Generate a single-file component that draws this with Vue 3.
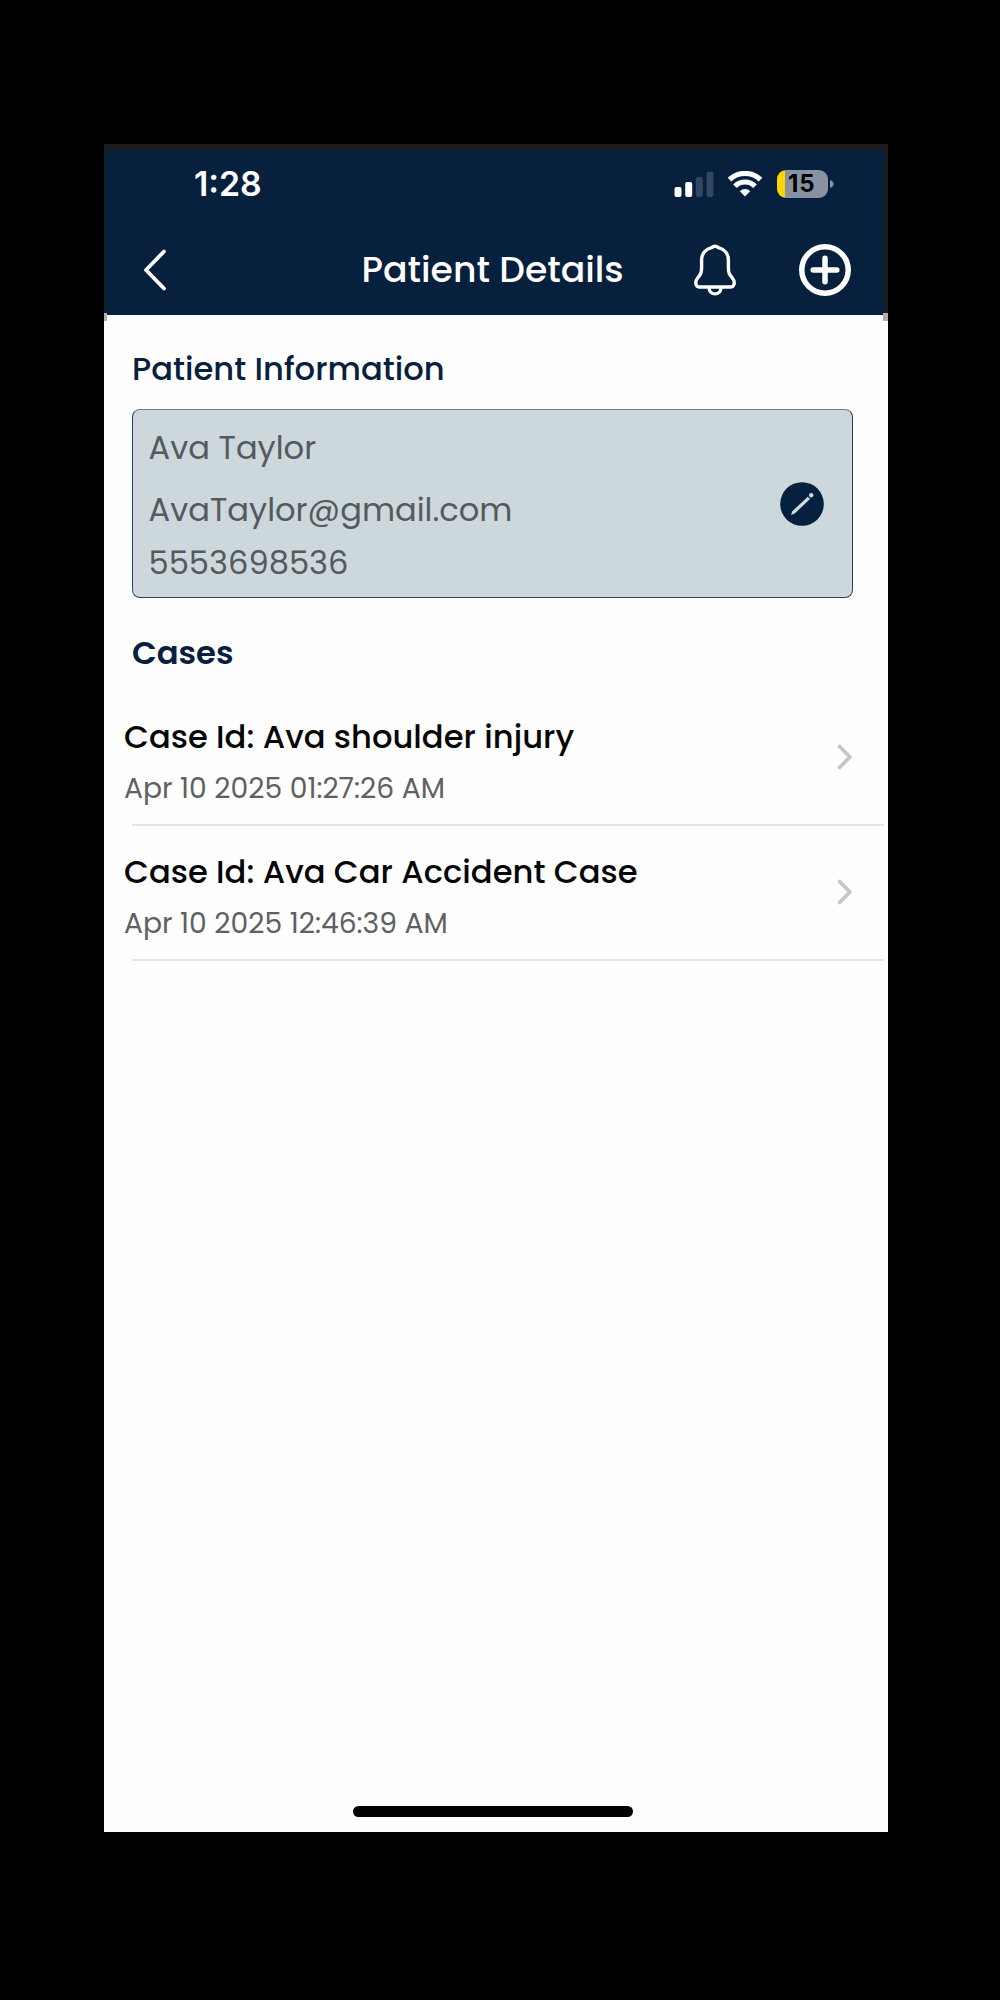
<script setup>
const cases = [
  { title: 'Case Id: Ava shoulder injury', date: 'Apr 10 2025 01:27:26 AM' },
  { title: 'Case Id: Ava Car Accident Case', date: 'Apr 10 2025 12:46:39 AM' },
]
</script>

<template>
  <main class="stage">
    <div class="phone">
      <header class="header">
        <div class="status">
          <span class="time">1:28</span>
          <svg class="signal" width="40" height="26" viewBox="0 0 40 26">
            <rect x="0.5" y="16" width="7" height="10" rx="2" fill="#fff" />
            <rect x="11.2" y="11" width="7" height="15" rx="2" fill="#fff" />
            <rect x="21.8" y="6" width="7" height="20" rx="2" fill="#334762" />
            <rect x="32.5" y="0.8" width="7" height="25.2" rx="2" fill="#334762" />
          </svg>
          <svg class="wifi" width="36" height="26" viewBox="0 0 36 26">
            <g fill="none" stroke="#fff" stroke-width="5.2">
              <path d="M2.5 8.6A22.5 22.5 0 0 1 33.500 8.600" />
              <path d="M8 15.200A14 14 0 0 1 28 15.200" />
            </g>
            <path d="M18 25.500L12.800 20.200A7.500 7.500 0 0 1 23.200 20.200Z" fill="#fff" />
          </svg>
          <div class="battery"><span class="pct">15</span></div>
          <svg class="nub" width="4" height="8" viewBox="0 0 4 8"><path d="M0 0Q3.5 1.2 3.5 4T0 8Z" fill="#8992a0" /></svg>
        </div>
        <nav class="nav">
          <svg class="back" width="24" height="44" viewBox="0 0 24 44"><path d="M21 3.5L3 22L21 40.5" fill="none" stroke="#fff" stroke-width="3.8" stroke-linecap="round" stroke-linejoin="round" /></svg>
          <h1 class="name">Patient Details</h1>
          <svg class="bell" width="42" height="52" viewBox="0 0 42 52">
            <g fill="none" stroke="#fff" stroke-width="3.4" stroke-linejoin="round">
              <path d="M17.5 3.6Q21 .8 24.5 3.6C30.500 5.300 34.400 10 34.400 16V24C34.400 29 35.500 30.500 38 33.500C40.500 36.500 40.800 39 39.500 41.500Q38.800 43 37 43H5Q3.200 43 2.500 41.500C1.200 39 1.500 36.500 4 33.500C6.500 30.500 7.600 29 7.600 24V16C7.600 10 11.500 5.300 17.500 3.600Z" />
              <path d="M15 43.500C15 52 27 52 27 43.500" />
            </g>
          </svg>
          <svg class="add" width="52" height="52" viewBox="0 0 52 52"><g fill="none" stroke="#fff" stroke-width="5.5" stroke-linecap="round"><circle cx="26" cy="26" r="23.2" /><path d="M26 14.200V37.800M14.200 26H37.800" /></g></svg>
        </nav>
      </header>
      <div class="ears"><i></i><i></i></div>
      <section class="info">
        <h2 class="heading">Patient Information</h2>
        <div class="card">
          <div class="lines">
            <p>Ava Taylor</p>
            <p class="email">AvaTaylor@gmail.com</p>
            <p class="tel">5553698536</p>
          </div>
          <svg class="edit" width="44" height="44" viewBox="0 0 44 44"><circle cx="22" cy="22" r="21.8" fill="#06203f" /><path d="M11 33L12.3 29.200L27.800 14.700L30 17L14.700 31.600Z" fill="#cfdbe0" /><circle cx="31.2" cy="13.2" r="2.2" fill="#cfdbe0" /></svg>
        </div>
        <h2 class="heading cases">Cases</h2>
      </section>
      <ul class="list">
        <li v-for="item in cases" :key="item.date" class="row">
          <div>
            <p class="title">{{ item.title }}</p>
            <p class="date">{{ item.date }}</p>
          </div>
          <svg class="chev" width="18" height="28" viewBox="0 0 18 28"><path d="M3.5 3.5L14 14L3.5 24.5" fill="none" stroke="#c6c6c7" stroke-width="3.8" stroke-linecap="round" stroke-linejoin="round" /></svg>
        </li>
      </ul>
      <div class="home"></div>
    </div>
  </main>
</template>

<style>
body { margin: 0; background: #000; }
</style>

<style scoped>
* { box-sizing: border-box; margin: 0; padding: 0; }
.stage { height: 2000px; padding: 144px 112px 168px 104px; background: #000; font-family: Poppins, Inter, "Liberation Sans", sans-serif; white-space: nowrap; }
.phone { height: 1688px; background: #fefefe; display: flex; flex-direction: column; }
.header { height: 170.5px; background: #07203d; border-top: 6px solid #1c1c1e; border-right: 4px solid #1c1c1e; border-left: 1px solid #1c1c1e; color: #fff; flex: none; }
.status { height: 67px; display: flex; align-items: center; padding-left: 89px; font-family: Inter, "Liberation Sans", sans-serif; }
.time { width: 480px; font-size: 33.8px; font-weight: 600; line-height: 40px; }
.wifi { margin-left: 13px; }
.battery { margin-left: 14px; width: 51px; height: 28px; border-radius: 9px; background: linear-gradient(90deg, #fdd20f 8px, #8992a0 8px); color: #000; padding-left: 11px; }
.pct { font-size: 24px; font-weight: 650; line-height: 28px; letter-spacing: 0.8px; }
.nub { margin-left: 2px; }
.nav { height: 97px; padding: 8px 0 0 38px; display: flex; align-items: center; }
.name { width: 332px; margin-left: 194.5px; font-size: 36.2px; font-weight: 500; line-height: 44px; }
.add { margin-left: 63px; }
.ears { height: 8px; margin: -2px 0 -6px; flex: none; display: flex; justify-content: space-between; }
.ears i { width: 3px; background: #aab0ae; }
.ears i:last-child { width: 5px; }
.info { padding: 34.5px 0 0 28px; }
.heading { font-size: 32.2px; font-weight: 500; line-height: 40px; color: #07203d; }
.card { margin-top: 19.5px; width: 721px; height: 189.5px; border: 1px solid #28406a; border-top-color: #6f7f8f; border-radius: 8px; background: #cdd8dd; display: flex; justify-content: space-between; padding: 18px 28px 0 15.5px; color: #555a5c; }
.lines p { font-size: 32.15px; line-height: 40px; }
.lines .email { margin-top: 22px; }
.lines .tel { margin-top: 13.5px; }
.edit { margin-top: 54px; }
.cases { margin-top: 35px; font-size: 32.2px; font-weight: 600; }
.list { list-style: none; margin-top: 18px; }
.row { height: 135px; padding: 25.5px 34px 0 20px; display: flex; justify-content: space-between; background: linear-gradient(#e5e5e6, #e5e5e6) 28px 100% / 752px 2px no-repeat; }
.title { font-size: 32.2px; font-weight: 500; line-height: 40px; color: #060606; }
.date { margin-top: 11px; font-size: 28.2px; line-height: 40px; color: #606062; }
.chev { margin-top: 26.5px; }
.home { margin: auto auto 15px 249px; width: 280px; height: 11px; border-radius: 6px; background: #000; }
</style>
